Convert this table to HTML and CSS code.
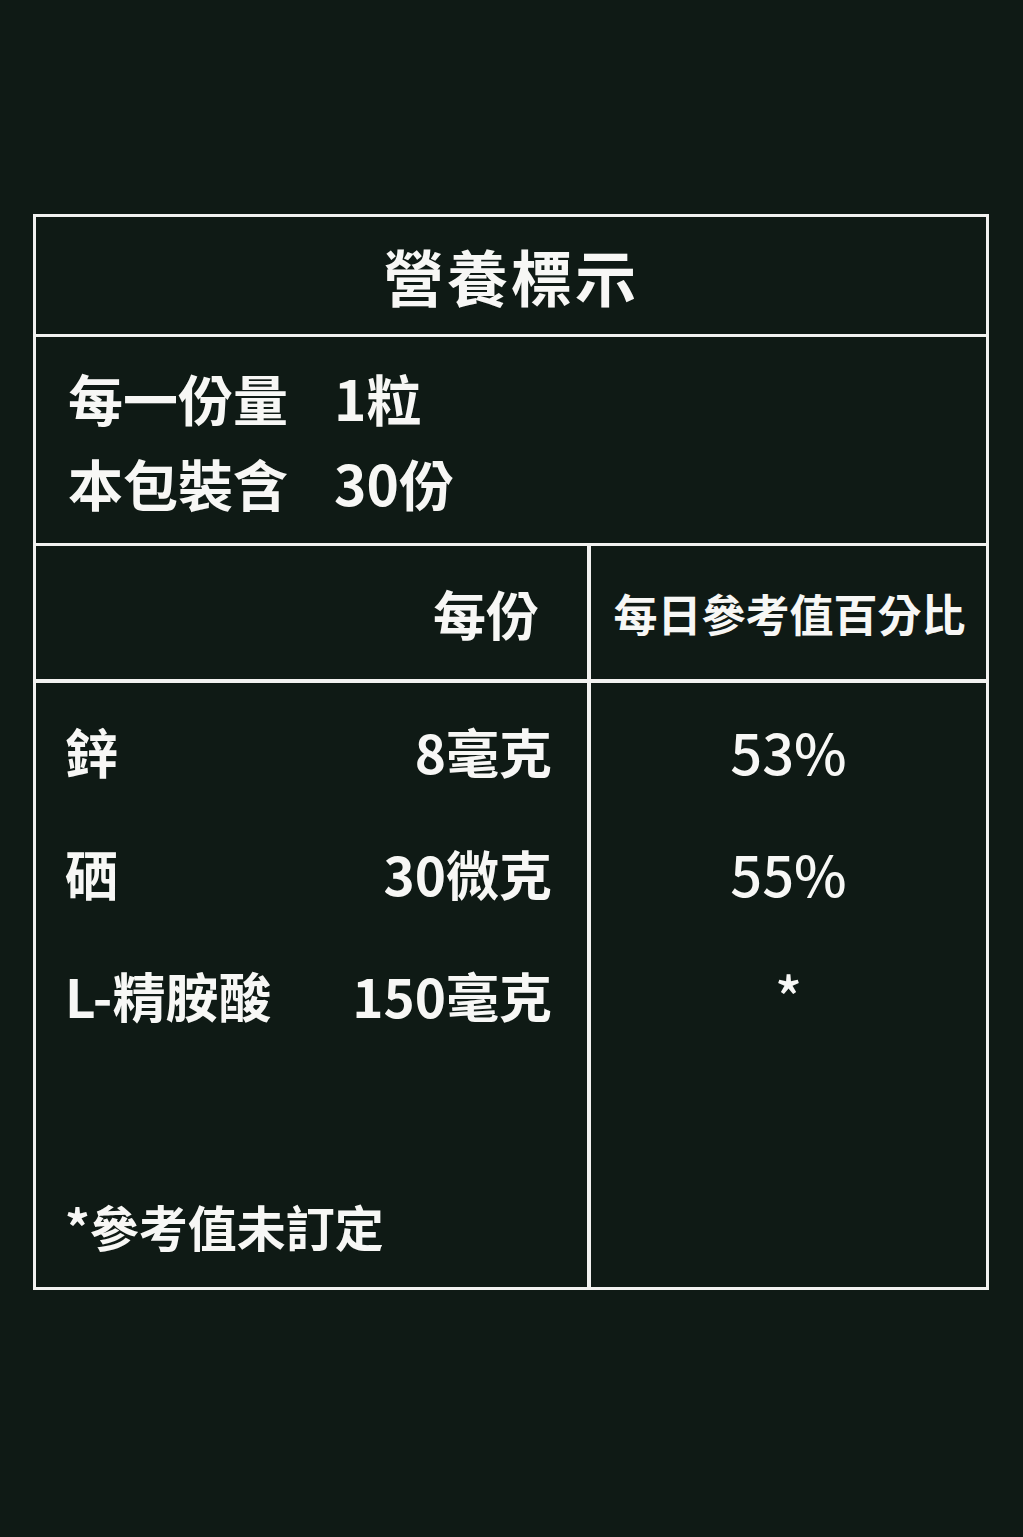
FILE: index.html
```html
<!DOCTYPE html>
<html lang="zh-Hant">
<head>
<meta charset="utf-8">
<title>營養標示</title>
<link rel="stylesheet" href="styles.css">
</head>
<body>
<div class="label">
  <div class="title">營養標示</div>
  <div class="serving">
    <div class="srow"><span class="skey">每一份量</span><span class="sval">1粒</span></div>
    <div class="srow"><span class="skey">本包裝含</span><span class="sval">30份</span></div>
  </div>
  <div class="facts">
    <div class="hcell hleft">每份</div>
    <div class="hcell hright">每日參考值百分比</div>
    <div class="bcell bleft">
      <div class="row"><span>鋅</span><span>8毫克</span></div>
      <div class="row"><span>硒</span><span>30微克</span></div>
      <div class="row"><span>L-精胺酸</span><span>150毫克</span></div>
      <div class="note">*參考值未訂定</div>
    </div>
    <div class="bcell bright">
      <div class="row center">53%</div>
      <div class="row center">55%</div>
      <div class="row center star">*</div>
    </div>
  </div>
</div>
</body>
</html>
```

FILE: styles.css
```css
html, body {
  margin: 0;
  padding: 0;
}
body {
  background: #0f1a15;
  width: 1023px;
  height: 1537px;
  overflow: hidden;
  color: #f7f7f5;
  font-family: "Noto Sans CJK TC", "Noto Sans", sans-serif;
  font-weight: 700;
}
.label {
  box-sizing: border-box;
  width: 956px;
  margin: 214px 0 0 33px;
  border: 3px solid #f2f2f0;
}
.title {
  box-sizing: border-box;
  height: 120px;
  padding-top: 23px;
  text-align: center;
  font-size: 61px;
  line-height: 72px;
  letter-spacing: 3px;
  border-bottom: 3px solid #f2f2f0;
}
.serving {
  height: 209px;
  box-sizing: border-box;
  padding: 18px 0 0 32px;
  border-bottom: 3px solid #f2f2f0;
  font-size: 55px;
}
.srow {
  display: flex;
  line-height: 85px;
  height: 85px;
}
.skey {
  width: 266px;
}
.facts {
  display: grid;
  grid-template-columns: 551px 399px;
}
.hcell {
  height: 137px;
  box-sizing: border-box;
  border-bottom: 4px solid #f2f2f0;
  display: flex;
  align-items: center;
}
.hleft {
  justify-content: flex-end;
  padding-right: 48px;
  font-size: 53px;
}
.hright {
  border-left: 4px solid #f2f2f0;
  justify-content: center;
  padding-left: 2px;
  font-size: 44px;
}
.bcell {
  height: 604px;
  box-sizing: border-box;
  display: flex;
  flex-direction: column;
  padding-top: 7px;
  font-size: 53px;
}
.bleft {
  padding-left: 29px;
  padding-right: 35px;
  padding-bottom: 21px;
}
.bright {
  border-left: 4px solid #f2f2f0;
}
.row {
  display: flex;
  justify-content: space-between;
  height: 122px;
  line-height: 122px;
}
.row.center {
  justify-content: center;
  font-size: 56px;
  font-weight: 500;
}
.star {
  font-size: 46px;
}
.note {
  margin-top: auto;
  font-size: 49px;
  line-height: 80px;
}
```
